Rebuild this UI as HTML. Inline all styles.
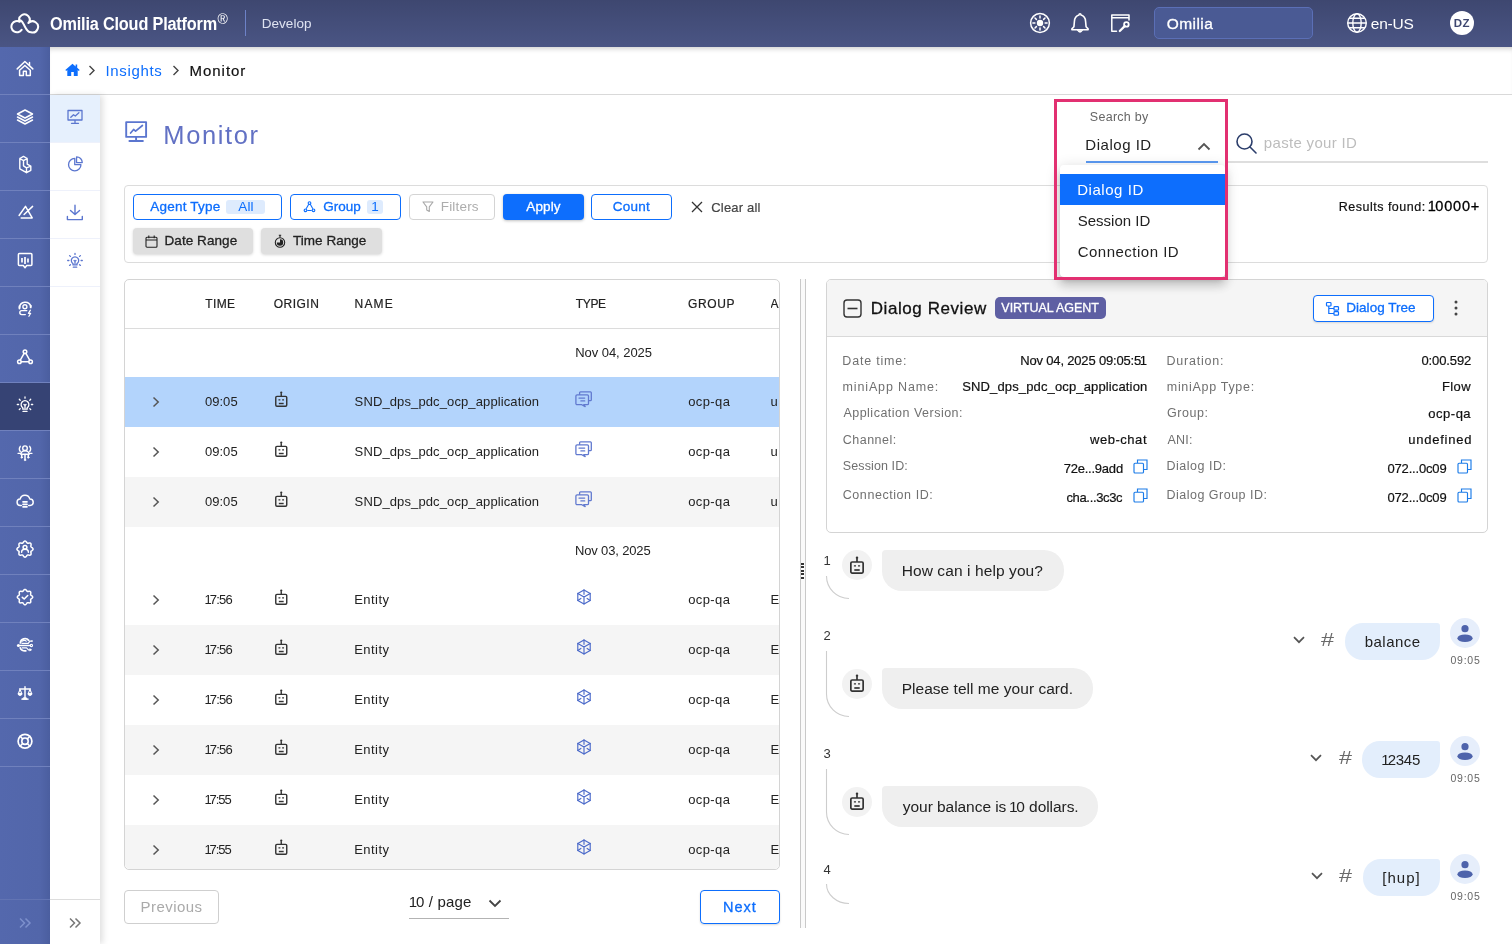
<!DOCTYPE html>
<html>
<head>
<meta charset="utf-8">
<title>Monitor</title>
<style>
*{box-sizing:border-box;margin:0;padding:0}
html,body{width:1512px;height:944px;overflow:hidden;background:#fff}
body{font-family:"Liberation Sans",sans-serif;color:#212121;position:relative;font-size:13px;line-height:1.2;filter:opacity(1)}
.abs{position:absolute}
svg{display:block}
.t{position:absolute;white-space:nowrap;display:block}
i.n1{font-style:normal;margin:0 var(--n) 0 var(--n)}
.m{-webkit-text-stroke:.3px currentColor}
.m2{-webkit-text-stroke:.2px currentColor}
#top{position:absolute;left:0;top:0;width:1512px;height:47px;background:linear-gradient(#3e4770,#4a5584);z-index:30}
#top .sep{position:absolute;left:245px;top:10px;width:1px;height:26px;background:#6d82c8}
#top .tenant{position:absolute;left:1154px;top:7px;width:159px;height:32px;border:1px solid #5b6fb6;border-radius:5px;background:#4a5a94}
#top .ava{position:absolute;left:1450px;top:11px;width:24px;height:24px;border-radius:50%;background:#fff}
#sb1{position:absolute;left:0;top:47px;width:50px;height:897px;overflow:hidden;background:linear-gradient(90deg,#5468ad 0,#5266aa 80%,#4b5e9f 100%);z-index:20}
#sb1 .it{position:absolute;left:0;width:50px;height:48px;border-bottom:1px solid #7081bd}
#sb1 .it.act{background:#364374}
#sb1 .it svg{position:absolute;left:15px;top:12px}
#sb1 .foot{position:absolute;left:0;top:852px;width:50px;height:45px;border-top:1px solid #6274b3}
#sb2{position:absolute;left:50px;top:95px;width:50px;height:849px;background:#fff;z-index:19;box-shadow:3px 0 6px rgba(0,0,0,.12)}
#sb2 .it{position:absolute;left:0;width:50px;height:48px;border-bottom:1px solid #eef1fb}
#sb2 .it.act{background:#e6f0fd}
#sb2 .it svg{position:absolute;left:15px;top:12px}
#sb2 .foot{position:absolute;left:0;top:804px;width:50px;height:45px;border-top:1px solid #ddd}
#bc{position:absolute;left:50px;top:47px;width:1462px;height:48px;background:#fff;border-bottom:1px solid #d9d9d9;z-index:18;box-shadow:inset 0 5px 5px -3px rgba(0,0,0,.18)}
.fbox{position:absolute;left:124px;top:185px;width:1364px;height:78px;border:1px solid #dcdcdc;border-radius:4px}
.btn{position:absolute;height:25.500px;border-radius:4px}
.btn.o{border:1.500px solid #0d6efd;background:#fff}
.btn.g{background:#dfdfdf;box-shadow:0 1px 3px rgba(0,0,0,.16)}
.btn.p{background:#0d6efd;box-shadow:0 1px 3px rgba(0,0,0,.25)}
.btn.d{border:1px solid #d4d4d4;background:#fff}
.chip{position:absolute;height:14px;background:#deebfd;border-radius:3px}
.pink{position:absolute;left:1054px;top:99px;width:174px;height:181px;border:3px solid #e23071;z-index:13}
.dd{position:absolute;left:1060px;top:165px;width:165px;height:112px;background:#fff;border-radius:4px;box-shadow:0 5px 5px -3px rgba(0,0,0,.2),0 8px 10px 1px rgba(0,0,0,.14),0 3px 14px 2px rgba(0,0,0,.12);z-index:11}
.z{z-index:11}
.tbl{position:absolute;left:124px;top:279px;width:656px;height:591px;border:1px solid #d4d4d4;border-radius:5px}
.card{position:absolute;left:826px;top:279px;width:662px;height:254px;border:1px solid #d4d4d4;border-radius:5px;background:#fff;overflow:hidden}
.chd{position:absolute;left:0;top:0;width:100%;height:57px;background:#f5f5f5;border-bottom:1px solid #d9d9d9}
.bb{position:absolute;height:41px;border-radius:4px 20px 20px 20px;background:#efefef}
.ub{position:absolute;height:37px;border-radius:18px 3px 18px 18px;background:#e3eefc}
</style>
</head>
<body>
<div id="top">
<svg class="abs" style="left:10px;top:12px" width="30" height="23" viewBox="0 0 30 23" fill="none" stroke="#fff" stroke-width="2" stroke-linecap="round" stroke-linejoin="round"><path d="M11.600 17.900A5.600 5.600 0 1 1 9.700 9.800 5.200 5.200 0 1 1 18.400 11 5.600 5.600 0 1 1 21 20.300C17 20.300 15.500 15.500 13.700 12.300 12.700 10.300 11.800 9 10.700 8.400"/></svg>
<div class="t" style="left:49.68px;top:12.8px;font-size:17.5px;line-height:23px;letter-spacing:-0.2px;x:-0.789px;color:#fff;font-weight:bold;transform:scaleX(.93);transform-origin:0 50%">Omilia Cloud Platform</div>
<div class="t" style="left:217.500px;top:12px;font-size:14px;line-height:14px;color:#fff">®</div>
<div class="sep"></div>
<div class="t" style="left:261.79px;top:14.5px;font-size:13.5px;line-height:18px;letter-spacing:0.024px;color:#dfe3f1">Develop</div>
<svg class="abs" style="left:1029px;top:12px" width="22" height="22" viewBox="0 0 22 22" fill="none" stroke="#fff" stroke-width="1.500" stroke-linecap="round"><circle cx="11" cy="11" r="9.400"/><circle cx="11" cy="11" r="3.200" fill="#fff" stroke="none"/><path d="M11 3.900v2M11 16.100v2M3.900 11h2M16.100 11h2M6 6l1.400 1.400M14.600 14.600 16 16M6 16l1.400-1.400M14.600 7.400 16 6"/></svg>
<svg class="abs" style="left:1069px;top:11px" width="22" height="24" viewBox="0 0 22 24" fill="none" stroke="#fff" stroke-width="1.600" stroke-linecap="round" stroke-linejoin="round"><path d="M11 2.800c.7 0 1 .5 1.100 1.300 3 .8 4.300 3.200 4.500 6.400l.5 5.300 2 2.100v.8H2.900v-.8l2-2.100.5-5.300C5.600 7.300 6.900 4.900 9.900 4.100 10 3.300 10.300 2.800 11 2.800Z"/><path d="M8.600 19.400a2.500 2.500 0 0 0 4.800 0Z" fill="#fff" stroke-width="1"/></svg>
<svg class="abs" style="left:1109px;top:12px" width="24" height="22" viewBox="0 0 24 22" fill="none" stroke="#fff" stroke-width="1.500" stroke-linecap="round" stroke-linejoin="round"><path d="M7.500 19.200H2.800V2.900h17.200v5.200M2.800 5.800h17.200"/><circle cx="17.400" cy="12.400" r="2.300" stroke-width="1.800"/><path d="M15.700 14.100l-4.900 4.900" stroke-width="2.200"/></svg>
<div class="tenant"></div>
<div class="t m" style="left:1166.67px;top:13.5px;font-size:15.5px;line-height:20px;letter-spacing:0.442px;color:#fff">Omilia</div>
<svg class="abs" style="left:1346px;top:12px" width="22" height="22" viewBox="0 0 22 22" fill="none" stroke="#fff" stroke-width="1.400"><circle cx="11" cy="11" r="9.300"/><ellipse cx="11" cy="11" rx="4.200" ry="9.300"/><path d="M1.700 11h18.600M3.300 6.300h15.400M3.300 15.700h15.400"/></svg>
<div class="t" style="left:1370.74px;top:13.5px;font-size:15.5px;line-height:20px;letter-spacing:-0.217px;color:#fff">en-US</div>
<div class="ava"></div>
<div class="t" style="left:1453.83px;top:15.8px;font-size:11.5px;line-height:15px;letter-spacing:0.457px;color:#3e4770;font-weight:bold">DZ</div>
</div>
<div id="sb1"><div class="it" style="top:0px"><svg width="20" height="20" viewBox="0 0 20 20" fill="none" stroke="#fff" stroke-width="1.5" stroke-linecap="round" stroke-linejoin="round"><path d="M2.200 9.900 9.900 2.500l7.900 7.400M14.500 3.400v3" stroke-width="1.500"/><path d="M4.600 11.300 9.900 6.500l5.400 4.800v5.300H11.300V12.200H8.400v4.400H4.600Z" stroke-width="1.500"/></svg></div>
<div class="it" style="top:48px"><svg width="20" height="20" viewBox="0 0 20 20" fill="none" stroke="#fff" stroke-width="1.5" stroke-linecap="round" stroke-linejoin="round"><path d="M10 3 17.5 7 10 11 2.500 7ZM2.500 10l7.500 4 7.500-4M2.500 13l7.500 4 7.500-4"/></svg></div>
<div class="it" style="top:96px"><svg width="20" height="20" viewBox="0 0 20 20" fill="none" stroke="#fff" stroke-width="1.5" stroke-linecap="round" stroke-linejoin="round"><path d="M8.500 1.400 12.200 3.500V9.200L15.800 11.200V15.300L11.500 17.700 4.800 13.800V3.500ZM4.800 3.500 8.500 5.600 12.200 3.500M8.500 5.600V10.800L11.500 12.800 15.800 11.200M11.500 12.800V17.700" stroke-width="1.400"/></svg></div>
<div class="it" style="top:144px"><svg width="20" height="20" viewBox="0 0 20 20" fill="none" stroke="#fff" stroke-width="1.5" stroke-linecap="round" stroke-linejoin="round"><path d="M4.100 12.500 10.500 3.400 17.200 14.900H6.200M9.100 11.500 17.600 3.400"/></svg></div>
<div class="it" style="top:192px"><svg width="20" height="20" viewBox="0 0 20 20" fill="none" stroke="#fff" stroke-width="1.5" stroke-linecap="round" stroke-linejoin="round"><path d="M4.400 2.500h11.500a1 1 0 0 1 1 1v10a1 1 0 0 1-1 1h-4.200L10 16.700 8.300 14.500H4.400a1 1 0 0 1-1-1v-10a1 1 0 0 1 1-1Z"/><path d="M7 7v4.500M10 6v7M13 7.500v4" stroke-width="1.700" stroke-linecap="butt"/></svg></div>
<div class="it" style="top:240px"><svg width="20" height="20" viewBox="0 0 20 20" fill="none" stroke="#fff" stroke-width="1.5" stroke-linecap="round" stroke-linejoin="round"><path d="M4.500 8.600A5.800 5.800 0 0 1 15.800 7.300" stroke-width="1.500"/><path d="M4.500 7.200v2.400M15.700 6.600v1.800" stroke-width="1.900"/><circle cx="9.900" cy="7.700" r="2" stroke-width="1.400"/><path d="M11.800 11.600H6.800a2 2 0 0 0 0 4H10.300" stroke-width="1.400"/><path d="M15.400 11.200l-2 3.100h2.300l-1.800 3" stroke-width="1.200"/></svg></div>
<div class="it" style="top:288px"><svg width="20" height="20" viewBox="0 0 20 20" fill="none" stroke="#fff" stroke-width="1.5" stroke-linecap="round" stroke-linejoin="round"><circle cx="10" cy="4.700" r="1.800"/><circle cx="4.400" cy="14.700" r="1.800"/><circle cx="15.600" cy="14.700" r="1.800"/><path d="M9.100 6.300 5.300 13.100M10.900 6.300l3.800 6.800M6.200 14.700h7.600"/></svg></div>
<div class="it act" style="top:336px"><svg width="20" height="20" viewBox="0 0 20 20" fill="none" stroke="#fff" stroke-width="1.5" stroke-linecap="round" stroke-linejoin="round"><path d="M7.800 12.800a3.900 3.900 0 1 1 4.400 0v1.400H7.800ZM8 16.400h4M10 10.300v2.500M9 9.500l1 .9 1-.9" stroke-width="1.300"/><path d="M10 2v1.200M4.300 4.300l.9.900M15.700 4.300l-.9.900M2.300 9.500h1.300M16.400 9.500h1.300M4.300 14.500l.9-.8M15.700 14.500l-.9-.8" stroke-width="1.300"/></svg></div>
<div class="it" style="top:384px"><svg width="20" height="20" viewBox="0 0 20 20" fill="none" stroke="#fff" stroke-width="1.5" stroke-linecap="round" stroke-linejoin="round"><circle cx="10" cy="5.200" r="2.300" stroke-width="1.400"/><path d="M5.800 11.300a4.200 3.600 0 0 1 8.400 0Z" stroke-width="1.400"/><path d="M5.300 3.300q-2 2.600 0 5.200M14.700 3.300q2 2.600 0 5.200M5.500 10.300H3M14.500 10.300H17" stroke-width="1.300"/><path d="M10 11.500v5M6.700 11.500v2.600M13.300 11.500v2.600" stroke-width="1.500"/><circle cx="10" cy="17" r=".8" fill="#fff" stroke-width=".6"/><circle cx="6.700" cy="14.500" r=".8" fill="#fff" stroke-width=".6"/><circle cx="13.300" cy="14.500" r=".8" fill="#fff" stroke-width=".6"/></svg></div>
<div class="it" style="top:432px"><svg width="20" height="20" viewBox="0 0 20 20" fill="none" stroke="#fff" stroke-width="1.5" stroke-linecap="round" stroke-linejoin="round"><path d="M6.300 14.500H5.500a3.200 3.200 0 0 1-.4-6.400 5 5 0 0 1 9.700-.2 3.300 3.300 0 0 1 .2 6.600h-1.300"/><path d="M8 10.800h4M8 13.300h4M8 15.800h4" stroke-width="1.700"/></svg></div>
<div class="it" style="top:480px"><svg width="20" height="20" viewBox="0 0 20 20" fill="none" stroke="#fff" stroke-width="1.5" stroke-linecap="round" stroke-linejoin="round"><path d="M10.00 2.00L10.52 2.13L11.00 2.49L11.41 2.99L11.77 3.51L12.09 3.93L12.45 4.19L12.88 4.26L13.41 4.19L14.03 4.07L14.67 4.01L15.27 4.10L15.73 4.37L16.00 4.83L16.09 5.43L16.03 6.07L15.91 6.69L15.84 7.22L15.91 7.65L16.17 8.01L16.59 8.33L17.11 8.69L17.61 9.10L17.97 9.58L18.10 10.10L17.97 10.62L17.61 11.10L17.11 11.51L16.59 11.87L16.17 12.19L15.91 12.55L15.84 12.98L15.91 13.51L16.03 14.13L16.09 14.77L16.00 15.37L15.73 15.83L15.27 16.10L14.67 16.19L14.03 16.13L13.41 16.01L12.88 15.94L12.45 16.01L12.09 16.27L11.77 16.69L11.41 17.21L11.00 17.71L10.52 18.07L10.00 18.20L9.48 18.07L9.00 17.71L8.59 17.21L8.23 16.69L7.91 16.27L7.55 16.01L7.12 15.94L6.59 16.01L5.97 16.13L5.33 16.19L4.73 16.10L4.27 15.83L4.00 15.37L3.91 14.77L3.97 14.13L4.09 13.51L4.16 12.98L4.09 12.55L3.83 12.19L3.41 11.87L2.89 11.51L2.39 11.10L2.03 10.62L1.90 10.10L2.03 9.58L2.39 9.10L2.89 8.69L3.41 8.33L3.83 8.01L4.09 7.65L4.16 7.22L4.09 6.69L3.97 6.07L3.91 5.43L4.00 4.83L4.27 4.37L4.73 4.10L5.33 4.01L5.97 4.07L6.59 4.19L7.12 4.26L7.55 4.19L7.91 3.93L8.23 3.51L8.59 2.99L9.00 2.49L9.48 2.13Z" stroke-width="1.500"/><circle cx="10" cy="8.300" r="1.900" stroke-width="1.500"/><path d="M6.600 13.300a3.400 3 0 0 1 6.800 0" stroke-width="1.500"/></svg></div>
<div class="it" style="top:528px"><svg width="20" height="20" viewBox="0 0 20 20" fill="none" stroke="#fff" stroke-width="1.5" stroke-linecap="round" stroke-linejoin="round"><path d="M10.00 2.40L10.50 2.52L10.95 2.86L11.35 3.33L11.68 3.82L12.00 4.22L12.33 4.46L12.75 4.53L13.25 4.47L13.83 4.36L14.44 4.31L15.01 4.39L15.44 4.66L15.71 5.09L15.79 5.66L15.74 6.27L15.63 6.85L15.57 7.35L15.64 7.77L15.88 8.10L16.28 8.42L16.77 8.75L17.24 9.15L17.58 9.60L17.70 10.10L17.58 10.60L17.24 11.05L16.77 11.45L16.28 11.78L15.88 12.10L15.64 12.43L15.57 12.85L15.63 13.35L15.74 13.93L15.79 14.54L15.71 15.11L15.44 15.54L15.01 15.81L14.44 15.89L13.83 15.84L13.25 15.73L12.75 15.67L12.33 15.74L12.00 15.98L11.68 16.38L11.35 16.87L10.95 17.34L10.50 17.68L10.00 17.80L9.50 17.68L9.05 17.34L8.65 16.87L8.32 16.38L8.00 15.98L7.67 15.74L7.25 15.67L6.75 15.73L6.17 15.84L5.56 15.89L4.99 15.81L4.56 15.54L4.29 15.11L4.21 14.54L4.26 13.93L4.37 13.35L4.43 12.85L4.36 12.43L4.12 12.10L3.72 11.78L3.23 11.45L2.76 11.05L2.42 10.60L2.30 10.10L2.42 9.60L2.76 9.15L3.23 8.75L3.72 8.42L4.12 8.10L4.36 7.77L4.43 7.35L4.37 6.85L4.26 6.27L4.21 5.66L4.29 5.09L4.56 4.66L4.99 4.39L5.56 4.31L6.17 4.36L6.75 4.47L7.25 4.53L7.67 4.46L8.00 4.22L8.32 3.82L8.65 3.33L9.05 2.86L9.50 2.52Z" stroke-width="1.500"/><path d="M7.300 10.300 9.200 12l3.500-3.500" stroke-width="1.600"/></svg></div>
<div class="it" style="top:576px"><svg width="20" height="20" viewBox="0 0 20 20" fill="none" stroke="#fff" stroke-width="1.5" stroke-linecap="round" stroke-linejoin="round"><path d="M4.600 10.500H15.200" stroke-width="1.300"/><circle cx="3.400" cy="10.500" r="1.500" fill="#fff" stroke="none"/><circle cx="16.400" cy="10.500" r="1.150" stroke-width="1.100"/><path d="M5.400 7.900A4.600 4.400 0 0 1 13.700 5.400" stroke-width="1.800"/><path d="M7.300 6.200a2.500 2 0 0 1 4 0" stroke-width="1.100"/><path d="M7 8.300H13.200L15 6.100H17" stroke-width="1.200"/><circle cx="17" cy="6" r=".8" fill="#fff" stroke="none"/><path d="M5.300 12.800A4.500 3.600 0 0 0 10.800 15.800" stroke-width="1.800"/><path d="M7.200 12.800H11.600L13.400 14.800H15.800" stroke-width="1.200"/><path d="M15 13.800 16.600 14.800 15 15.800Z" fill="#fff" stroke-width=".6"/></svg></div>
<div class="it" style="top:624px"><svg width="20" height="20" viewBox="0 0 20 20" fill="none" stroke="#fff" stroke-width="1.5" stroke-linecap="round" stroke-linejoin="round"><g transform="translate(1 1) scale(.9)"><path d="M10 3v12.500M6.500 16.800h7M4 5.500h12M10 3.200v0" stroke-width="1.600"/><path d="M4.500 6 2.500 11h4ZM15.500 6l-2 5h4Z" stroke-width="1.300"/><path d="M2.500 11a2 1.800 0 0 0 4 0ZM13.500 11a2 1.800 0 0 0 4 0Z" fill="#fff" stroke-width="1"/><path d="M7.500 17h5l-1-1.700h-3Z" fill="#fff" stroke-width="1"/></g></svg></div>
<div class="it" style="top:672px"><svg width="20" height="20" viewBox="0 0 20 20" fill="none" stroke="#fff" stroke-width="1.5" stroke-linecap="round" stroke-linejoin="round"><circle cx="10" cy="10.200" r="6.900" stroke-width="1.700"/><circle cx="10" cy="10.200" r="3.200" stroke-width="1.600"/><path d="M5.100 5.300l2.600 2.600M14.900 5.300l-2.600 2.600M5.100 15.100l2.600-2.600M14.900 15.100l-2.600-2.600" stroke-width="1.500"/></svg></div>
<div class="foot"><svg width="14" height="12" viewBox="0 0 14 12" fill="none" stroke="#7d90cc" stroke-width="1.500" style="position:absolute;left:18px;top:16.5px"><path d="M2 1.500 6.500 6 2 10.500M7.500 1.500 12 6 7.500 10.500"/></svg></div></div>
<div id="sb2"><div class="it act" style="top:0px"><svg width="20" height="20" viewBox="0 0 20 20" fill="none" stroke="#5b76cf" stroke-width="1.300" stroke-linecap="round" stroke-linejoin="round"><path d="M3 3.500h14v9.500H3ZM10 13v3M6.500 16.300h7M5.800 10.300l2.700-2.600 1.800 1.300 3.600-3.200"/></svg></div>
<div class="it" style="top:48px"><svg width="20" height="20" viewBox="0 0 20 20" fill="none" stroke="#5b76cf" stroke-width="1.300" stroke-linecap="round" stroke-linejoin="round"><path d="M9.750 3.450a6.200 6.200 0 1 0 6.200 6.200H9.750ZM11.550 1.850v5.700h5.700a5.700 5.700 0 0 0-5.700-5.700Z"/></svg></div>
<div class="it" style="top:96px"><svg width="20" height="20" viewBox="0 0 20 20" fill="none" stroke="#5b76cf" stroke-width="1.300" stroke-linecap="round" stroke-linejoin="round"><path d="M10 2.300v9M5.500 7.400 10 11.600l4.600-4.200M2.400 13.400v3.200h14.900v-3.200" stroke-width="1.400"/></svg></div>
<div class="it" style="top:144px"><svg width="20" height="20" viewBox="0 0 20 20" fill="none" stroke="#5b76cf" stroke-width="1.300" stroke-linecap="round" stroke-linejoin="round"><path d="M8 12.600a3.700 3.700 0 1 1 4 0v1.300H8ZM8.300 16.200h3.400M10 10.300v2.300M9.100 9.500l.9.900.9-.9"/><path d="M10 2.300v1.100M4.600 4.600l.8.800M15.400 4.600l-.8.800M2.700 9.500h1.200M16.100 9.500h1.200M4.600 14.400l.8-.7M15.400 14.400l-.8-.7"/></svg></div>
<div class="foot"><svg width="14" height="12" viewBox="0 0 14 12" fill="none" stroke="#777" stroke-width="1.500" style="position:absolute;left:18px;top:16.5px"><path d="M2 1.500 6.500 6 2 10.500M7.500 1.500 12 6 7.500 10.500"/></svg></div></div>
<div id="bc">
<svg class="abs" style="left:15px;top:16px" width="15" height="14" viewBox="0 0 15 14" fill="#0d6efd"><path d="M7.500.8 0.300 7l.9 1L2.300 7v6h3.900V9h2.600v4h3.900V7l1.100 1 .9-1-2.500-2.200V1.500h-1.600v1.900Z"/></svg>
<svg class="abs" style="left:38px;top:18px" width="8" height="11" viewBox="0 0 8 11" fill="none" stroke="#444" stroke-width="1.400"><path d="M1.500 1 6 5.500 1.500 10"/></svg>
<svg class="abs" style="left:122px;top:18px" width="8" height="11" viewBox="0 0 8 11" fill="none" stroke="#444" stroke-width="1.400"><path d="M1.500 1 6 5.500 1.500 10"/></svg>
<div class="t" style="left:55.42px;top:14.0px;font-size:15px;line-height:20px;letter-spacing:0.66px;color:#0d6efd">Insights</div>
<div class="t m2" style="left:139.47px;top:14.0px;font-size:15px;line-height:20px;letter-spacing:0.975px;color:#111">Monitor</div>
</div>
<svg class="abs" style="left:124px;top:120px" width="25" height="25" viewBox="0 0 25 25" fill="none" stroke="#5b76cf" stroke-width="1.900" stroke-linecap="round" stroke-linejoin="round"><path d="M2.200 2.100h19.900v14.800H2.200ZM12.100 17v3.600M5.400 21h13.500"/><path d="M6.600 13 9.600 9.500l2 1.600 6.800-5.600" stroke-width="1.700"/></svg>
<div class="t" style="left:163.31px;top:118.5px;font-size:25.5px;line-height:33px;letter-spacing:1.614px;color:#6271c4">Monitor</div>
<div class="fbox"></div>
<div class="btn o" style="left:133px;top:194px;width:149px"></div><div class="chip" style="left:226px;top:200px;width:39px"></div>
<div class="t m" style="left:150.37px;top:198.0px;font-size:13.5px;line-height:18px;letter-spacing:0.196px;color:#0d6efd">Agent Type</div>
<div class="t" style="left:238.37px;top:198.0px;font-size:13.5px;line-height:18px;letter-spacing:0.057px;color:#0d6efd">All</div>
<div class="btn o" style="left:290px;top:194px;width:110.500px"></div><div class="chip" style="left:367.300px;top:200px;width:16.200px"></div>
<svg class="abs" style="left:302.500px;top:201px" width="13" height="12" viewBox="0 0 13 12" fill="none" stroke="#0d6efd" stroke-width="1.100"><path d="M5.700 3.200 3.200 7.700M7.300 3.200l2.500 4.500M4.300 9.500h4.400"/><circle cx="6.500" cy="2.100" r="1.350"/><circle cx="2.500" cy="9.300" r="1.350"/><circle cx="10.500" cy="9.300" r="1.350"/></svg>
<div class="t m" style="left:323.22px;top:198.0px;font-size:13.5px;line-height:18px;letter-spacing:-0.021px;color:#0d6efd">Group</div>
<div class="t" style="left:371.27px;top:198.0px;font-size:13.5px;line-height:18px;letter-spacing:0px;color:#0d6efd">1</div>
<div class="btn d" style="left:408.500px;top:194px;width:86.500px"></div>
<svg class="abs" style="left:421.500px;top:201px" width="12" height="12" viewBox="0 0 12 12" fill="none" stroke="#a8a8a8" stroke-width="1.100" stroke-linejoin="round"><path d="M1 1h10L7.300 5.800v4.700L4.700 9V5.800Z"/></svg>
<div class="t" style="left:440.79px;top:198.0px;font-size:13.5px;line-height:18px;letter-spacing:0.174px;color:#adadad">Filters</div>
<div class="btn p" style="left:503px;top:194px;width:80.500px"></div>
<div class="t m" style="left:526.37px;top:198.0px;font-size:13.5px;line-height:18px;letter-spacing:0.118px;color:#fff">Apply</div>
<div class="btn o" style="left:591px;top:194px;width:80.500px"></div>
<div class="t m" style="left:612.71px;top:198.0px;font-size:13.5px;line-height:18px;letter-spacing:0.238px;color:#0d6efd">Count</div>
<svg class="abs" style="left:691px;top:201px" width="12" height="12" viewBox="0 0 12 12" fill="none" stroke="#333" stroke-width="1.300"><path d="M1 1l10 10M11 1 1 11"/></svg>
<div class="t m2" style="left:711.24px;top:198.5px;font-size:13px;line-height:17px;letter-spacing:0.193px;color:#444">Clear all</div>
<div class="btn g" style="left:133px;top:228px;width:120px"></div>
<svg class="abs" style="left:145px;top:235px" width="13" height="13" viewBox="0 0 13 13" fill="none" stroke="#222" stroke-width="1.100"><rect x="1" y="2.200" width="11" height="10" rx="1"/><path d="M1 5h11M3.800 .600v2.600M9.200 .600v2.600"/></svg>
<div class="t m" style="left:164.49px;top:232.0px;font-size:13.5px;line-height:18px;letter-spacing:0.072px;color:#222">Date Range</div>
<div class="btn g" style="left:261px;top:228px;width:121px"></div>
<svg class="abs" style="left:273px;top:234px" width="14" height="15" viewBox="0 0 14 15" fill="none" stroke="#222" stroke-width="1.100"><circle cx="7" cy="8.500" r="4.700"/><path d="M5.800 1.300h2.400M7 1.300v2.300"/><path d="M7 8.500V5.300A3.200 3.200 0 1 1 3.800 8.500Z" fill="#222" stroke="none"/></svg>
<div class="t m" style="left:293.1px;top:232.0px;font-size:13.5px;line-height:18px;letter-spacing:0.008px;color:#222">Time Range</div>
<div class="t m2" style="left:1338.77px;top:199.0px;font-size:12.5px;line-height:16px;letter-spacing:0.496px;color:#111">Results found:</div>
<div class="t m" style="left:1429.03px;top:197.3px;font-size:14.5px;line-height:19px;letter-spacing:0.832px;--n:-1.34px;color:#000"><i class="n1">1</i>0000+</div>
<div class="tbl"></div>
<div class="t m2" style="left:205.33px;top:295.7px;font-size:12px;line-height:16px;letter-spacing:0.338px;color:#222">TIME</div>
<div class="t m2" style="left:273.63px;top:295.7px;font-size:12px;line-height:16px;letter-spacing:0.515px;color:#222">ORIGIN</div>
<div class="t m2" style="left:354.62px;top:295.7px;font-size:12px;line-height:16px;letter-spacing:1.143px;color:#222">NAME</div>
<div class="t m2" style="left:575.73px;top:295.7px;font-size:12px;line-height:16px;letter-spacing:-0.32px;color:#222">TYPE</div>
<div class="t m2" style="left:688.1px;top:295.7px;font-size:12px;line-height:16px;letter-spacing:0.605px;color:#222">GROUP</div>
<div class="t m2" style="left:770.500px;top:295.700px;width:8.500px;overflow:hidden;font-size:12px;line-height:16px;color:#222">A</div>
<div class="abs" style="left:125px;top:328px;width:654px;height:1px;background:#dcdcdc"></div>
<div class="t" style="left:575.13px;top:344.2px;font-size:13px;line-height:17px;letter-spacing:-0.039px;color:#222">Nov 04, 2025</div>
<div class="t" style="left:575.03px;top:542.2px;font-size:13px;line-height:17px;letter-spacing:-0.157px;color:#222">Nov 03, 2025</div>
<div class="abs" style="left:125px;top:377px;width:654px;height:50px;background:#b3d4fc"></div>
<svg class="abs" style="left:151.8px;top:395.7px" width="8" height="12" viewBox="0 0 8 12" fill="none" stroke="#555" stroke-width="1.500"><path d="M1.500 1.500 6.200 6 1.500 10.500"/></svg>
<div class="t" style="left:204.89px;top:393.2px;font-size:13px;line-height:17px;letter-spacing:0.052px;color:#222">09:05</div>
<svg class="abs" style="left:275.3px;top:390.7px" width="12.5" height="16.1" viewBox="0 0 14 18" fill="none" stroke="#333" stroke-width="1.6"><rect x=".85" y="6" width="12.300" height="11.100" rx="1.300"/><path d="M7 6V2.500"/><circle cx="7" cy="1.800" r="1.250" fill="#333" stroke="none"/><path d="M4.300 14h5.400"/><path d="M3.900 9.900h2.100M8 9.900h2.100" stroke-width="1.200"/></svg>
<div class="t" style="left:354.61px;top:393.2px;font-size:13px;line-height:17px;letter-spacing:0.116px;color:#222">SND_dps_pdc_ocp_application</div>
<svg class="abs" style="left:575.2px;top:390.8px" width="17" height="17" viewBox="0 0 17 17" fill="none" stroke="#6179cf" stroke-width="1.300" stroke-linejoin="round" stroke-linecap="round"><path d="M4.600 3.300V1.700a.9.9 0 0 1 .9-.9h9.900a.9.9 0 0 1 .9.900v7.100a.9.9 0 0 1-.9.900h-1.300"/><path d="M2.100 3.900h10.200a1.200 1.200 0 0 1 1.200 1.200v7.400a1.200 1.200 0 0 1-1.200 1.200H8.800l1.400 1.900-3.400-1.900H2.100a1.200 1.200 0 0 1-1.200-1.200V5.100a1.200 1.200 0 0 1 1.200-1.200Z"/><path d="M4 7.100h5.700M5.900 9.900h3.800"/></svg>
<div class="t" style="left:688.15px;top:393.2px;font-size:13px;line-height:17px;letter-spacing:0.399px;color:#222">ocp-qa</div>
<div class="t" style="left:770.500px;top:393px;width:8.500px;overflow:hidden;font-size:13px;line-height:17px;color:#222">u</div>
<svg class="abs" style="left:151.8px;top:445.7px" width="8" height="12" viewBox="0 0 8 12" fill="none" stroke="#555" stroke-width="1.500"><path d="M1.500 1.500 6.200 6 1.500 10.500"/></svg>
<div class="t" style="left:204.89px;top:443.2px;font-size:13px;line-height:17px;letter-spacing:0.052px;color:#222">09:05</div>
<svg class="abs" style="left:275.3px;top:440.7px" width="12.5" height="16.1" viewBox="0 0 14 18" fill="none" stroke="#333" stroke-width="1.6"><rect x=".85" y="6" width="12.300" height="11.100" rx="1.300"/><path d="M7 6V2.500"/><circle cx="7" cy="1.800" r="1.250" fill="#333" stroke="none"/><path d="M4.300 14h5.400"/><path d="M3.900 9.900h2.100M8 9.900h2.100" stroke-width="1.200"/></svg>
<div class="t" style="left:354.61px;top:443.2px;font-size:13px;line-height:17px;letter-spacing:0.116px;color:#222">SND_dps_pdc_ocp_application</div>
<svg class="abs" style="left:575.2px;top:440.8px" width="17" height="17" viewBox="0 0 17 17" fill="none" stroke="#6179cf" stroke-width="1.300" stroke-linejoin="round" stroke-linecap="round"><path d="M4.600 3.300V1.700a.9.9 0 0 1 .9-.9h9.900a.9.9 0 0 1 .9.900v7.100a.9.9 0 0 1-.9.900h-1.300"/><path d="M2.100 3.900h10.200a1.200 1.200 0 0 1 1.200 1.200v7.400a1.200 1.200 0 0 1-1.200 1.200H8.800l1.400 1.900-3.400-1.900H2.100a1.200 1.200 0 0 1-1.200-1.200V5.100a1.200 1.200 0 0 1 1.200-1.200Z"/><path d="M4 7.100h5.700M5.900 9.900h3.800"/></svg>
<div class="t" style="left:688.15px;top:443.2px;font-size:13px;line-height:17px;letter-spacing:0.399px;color:#222">ocp-qa</div>
<div class="t" style="left:770.500px;top:443px;width:8.500px;overflow:hidden;font-size:13px;line-height:17px;color:#222">u</div>
<div class="abs" style="left:125px;top:477px;width:654px;height:50px;background:#f5f5f5"></div>
<svg class="abs" style="left:151.8px;top:495.7px" width="8" height="12" viewBox="0 0 8 12" fill="none" stroke="#555" stroke-width="1.500"><path d="M1.500 1.500 6.200 6 1.500 10.500"/></svg>
<div class="t" style="left:204.89px;top:493.2px;font-size:13px;line-height:17px;letter-spacing:0.052px;color:#222">09:05</div>
<svg class="abs" style="left:275.3px;top:490.7px" width="12.5" height="16.1" viewBox="0 0 14 18" fill="none" stroke="#333" stroke-width="1.6"><rect x=".85" y="6" width="12.300" height="11.100" rx="1.300"/><path d="M7 6V2.500"/><circle cx="7" cy="1.800" r="1.250" fill="#333" stroke="none"/><path d="M4.300 14h5.400"/><path d="M3.900 9.900h2.100M8 9.900h2.100" stroke-width="1.200"/></svg>
<div class="t" style="left:354.61px;top:493.2px;font-size:13px;line-height:17px;letter-spacing:0.116px;color:#222">SND_dps_pdc_ocp_application</div>
<svg class="abs" style="left:575.2px;top:490.8px" width="17" height="17" viewBox="0 0 17 17" fill="none" stroke="#6179cf" stroke-width="1.300" stroke-linejoin="round" stroke-linecap="round"><path d="M4.600 3.300V1.700a.9.9 0 0 1 .9-.9h9.900a.9.9 0 0 1 .9.900v7.100a.9.9 0 0 1-.9.900h-1.300"/><path d="M2.100 3.900h10.200a1.200 1.200 0 0 1 1.200 1.200v7.400a1.200 1.200 0 0 1-1.200 1.200H8.800l1.400 1.900-3.400-1.900H2.100a1.200 1.200 0 0 1-1.200-1.200V5.100a1.200 1.200 0 0 1 1.200-1.200Z"/><path d="M4 7.100h5.700M5.900 9.900h3.800"/></svg>
<div class="t" style="left:688.15px;top:493.2px;font-size:13px;line-height:17px;letter-spacing:0.399px;color:#222">ocp-qa</div>
<div class="t" style="left:770.500px;top:493px;width:8.500px;overflow:hidden;font-size:13px;line-height:17px;color:#222">u</div>
<svg class="abs" style="left:151.8px;top:593.7px" width="8" height="12" viewBox="0 0 8 12" fill="none" stroke="#555" stroke-width="1.500"><path d="M1.500 1.500 6.200 6 1.500 10.500"/></svg>
<div class="t" style="left:205.61px;top:591.2px;font-size:13px;line-height:17px;letter-spacing:-0.746px;--n:-1.2px;color:#222"><i class="n1">1</i>7:56</div>
<svg class="abs" style="left:275.3px;top:588.7px" width="12.5" height="16.1" viewBox="0 0 14 18" fill="none" stroke="#333" stroke-width="1.6"><rect x=".85" y="6" width="12.300" height="11.100" rx="1.300"/><path d="M7 6V2.500"/><circle cx="7" cy="1.800" r="1.250" fill="#333" stroke="none"/><path d="M4.300 14h5.400"/><path d="M3.900 9.900h2.100M8 9.900h2.100" stroke-width="1.200"/></svg>
<div class="t" style="left:354.13px;top:591.2px;font-size:13px;line-height:17px;letter-spacing:0.495px;color:#222">Entity</div>
<svg class="abs" style="left:575.5px;top:589px" width="16" height="16" viewBox="0 0 16 16" fill="none" stroke="#4a69c9" stroke-width="1.150" stroke-linejoin="round" stroke-linecap="round"><path d="M8 .9 14.200 4.400v7L8 14.900 1.800 11.400v-7Z"/><path d="M1.800 4.400 8 7.900l6.200-3.500M8 7.900v7M8 .9v4.400M1.800 11.400l3.100-2M14.200 11.400l-3.100-2"/></svg>
<div class="t" style="left:688.15px;top:591.2px;font-size:13px;line-height:17px;letter-spacing:0.399px;color:#222">ocp-qa</div>
<div class="t" style="left:770.500px;top:591px;width:8.500px;overflow:hidden;font-size:13px;line-height:17px;color:#222">E</div>
<div class="abs" style="left:125px;top:625px;width:654px;height:50px;background:#f5f5f5"></div>
<svg class="abs" style="left:151.8px;top:643.7px" width="8" height="12" viewBox="0 0 8 12" fill="none" stroke="#555" stroke-width="1.500"><path d="M1.500 1.500 6.200 6 1.500 10.500"/></svg>
<div class="t" style="left:205.61px;top:641.2px;font-size:13px;line-height:17px;letter-spacing:-0.746px;--n:-1.2px;color:#222"><i class="n1">1</i>7:56</div>
<svg class="abs" style="left:275.3px;top:638.7px" width="12.5" height="16.1" viewBox="0 0 14 18" fill="none" stroke="#333" stroke-width="1.6"><rect x=".85" y="6" width="12.300" height="11.100" rx="1.300"/><path d="M7 6V2.500"/><circle cx="7" cy="1.800" r="1.250" fill="#333" stroke="none"/><path d="M4.300 14h5.400"/><path d="M3.900 9.900h2.100M8 9.900h2.100" stroke-width="1.200"/></svg>
<div class="t" style="left:354.13px;top:641.2px;font-size:13px;line-height:17px;letter-spacing:0.495px;color:#222">Entity</div>
<svg class="abs" style="left:575.5px;top:639px" width="16" height="16" viewBox="0 0 16 16" fill="none" stroke="#4a69c9" stroke-width="1.150" stroke-linejoin="round" stroke-linecap="round"><path d="M8 .9 14.200 4.400v7L8 14.900 1.800 11.400v-7Z"/><path d="M1.800 4.400 8 7.900l6.200-3.500M8 7.900v7M8 .9v4.400M1.800 11.400l3.100-2M14.200 11.400l-3.100-2"/></svg>
<div class="t" style="left:688.15px;top:641.2px;font-size:13px;line-height:17px;letter-spacing:0.399px;color:#222">ocp-qa</div>
<div class="t" style="left:770.500px;top:641px;width:8.500px;overflow:hidden;font-size:13px;line-height:17px;color:#222">E</div>
<svg class="abs" style="left:151.8px;top:693.7px" width="8" height="12" viewBox="0 0 8 12" fill="none" stroke="#555" stroke-width="1.500"><path d="M1.500 1.500 6.200 6 1.500 10.500"/></svg>
<div class="t" style="left:205.61px;top:691.2px;font-size:13px;line-height:17px;letter-spacing:-0.746px;--n:-1.2px;color:#222"><i class="n1">1</i>7:56</div>
<svg class="abs" style="left:275.3px;top:688.7px" width="12.5" height="16.1" viewBox="0 0 14 18" fill="none" stroke="#333" stroke-width="1.6"><rect x=".85" y="6" width="12.300" height="11.100" rx="1.300"/><path d="M7 6V2.500"/><circle cx="7" cy="1.800" r="1.250" fill="#333" stroke="none"/><path d="M4.300 14h5.400"/><path d="M3.900 9.900h2.100M8 9.900h2.100" stroke-width="1.200"/></svg>
<div class="t" style="left:354.13px;top:691.2px;font-size:13px;line-height:17px;letter-spacing:0.495px;color:#222">Entity</div>
<svg class="abs" style="left:575.5px;top:689px" width="16" height="16" viewBox="0 0 16 16" fill="none" stroke="#4a69c9" stroke-width="1.150" stroke-linejoin="round" stroke-linecap="round"><path d="M8 .9 14.200 4.400v7L8 14.900 1.800 11.400v-7Z"/><path d="M1.800 4.400 8 7.900l6.200-3.500M8 7.900v7M8 .9v4.400M1.800 11.400l3.100-2M14.200 11.400l-3.100-2"/></svg>
<div class="t" style="left:688.15px;top:691.2px;font-size:13px;line-height:17px;letter-spacing:0.399px;color:#222">ocp-qa</div>
<div class="t" style="left:770.500px;top:691px;width:8.500px;overflow:hidden;font-size:13px;line-height:17px;color:#222">E</div>
<div class="abs" style="left:125px;top:725px;width:654px;height:50px;background:#f5f5f5"></div>
<svg class="abs" style="left:151.8px;top:743.7px" width="8" height="12" viewBox="0 0 8 12" fill="none" stroke="#555" stroke-width="1.500"><path d="M1.500 1.500 6.200 6 1.500 10.500"/></svg>
<div class="t" style="left:205.61px;top:741.2px;font-size:13px;line-height:17px;letter-spacing:-0.746px;--n:-1.2px;color:#222"><i class="n1">1</i>7:56</div>
<svg class="abs" style="left:275.3px;top:738.7px" width="12.5" height="16.1" viewBox="0 0 14 18" fill="none" stroke="#333" stroke-width="1.6"><rect x=".85" y="6" width="12.300" height="11.100" rx="1.300"/><path d="M7 6V2.500"/><circle cx="7" cy="1.800" r="1.250" fill="#333" stroke="none"/><path d="M4.300 14h5.400"/><path d="M3.900 9.900h2.100M8 9.900h2.100" stroke-width="1.200"/></svg>
<div class="t" style="left:354.13px;top:741.2px;font-size:13px;line-height:17px;letter-spacing:0.495px;color:#222">Entity</div>
<svg class="abs" style="left:575.5px;top:739px" width="16" height="16" viewBox="0 0 16 16" fill="none" stroke="#4a69c9" stroke-width="1.150" stroke-linejoin="round" stroke-linecap="round"><path d="M8 .9 14.200 4.400v7L8 14.900 1.800 11.400v-7Z"/><path d="M1.800 4.400 8 7.900l6.200-3.500M8 7.900v7M8 .9v4.400M1.800 11.400l3.100-2M14.200 11.400l-3.100-2"/></svg>
<div class="t" style="left:688.15px;top:741.2px;font-size:13px;line-height:17px;letter-spacing:0.399px;color:#222">ocp-qa</div>
<div class="t" style="left:770.500px;top:741px;width:8.500px;overflow:hidden;font-size:13px;line-height:17px;color:#222">E</div>
<svg class="abs" style="left:151.8px;top:793.7px" width="8" height="12" viewBox="0 0 8 12" fill="none" stroke="#555" stroke-width="1.500"><path d="M1.500 1.500 6.200 6 1.500 10.500"/></svg>
<div class="t" style="left:205.61px;top:791.2px;font-size:13px;line-height:17px;letter-spacing:-1.003px;--n:-1.2px;color:#222"><i class="n1">1</i>7:55</div>
<svg class="abs" style="left:275.3px;top:788.7px" width="12.5" height="16.1" viewBox="0 0 14 18" fill="none" stroke="#333" stroke-width="1.6"><rect x=".85" y="6" width="12.300" height="11.100" rx="1.300"/><path d="M7 6V2.500"/><circle cx="7" cy="1.800" r="1.250" fill="#333" stroke="none"/><path d="M4.300 14h5.400"/><path d="M3.900 9.900h2.100M8 9.900h2.100" stroke-width="1.200"/></svg>
<div class="t" style="left:354.13px;top:791.2px;font-size:13px;line-height:17px;letter-spacing:0.495px;color:#222">Entity</div>
<svg class="abs" style="left:575.5px;top:789px" width="16" height="16" viewBox="0 0 16 16" fill="none" stroke="#4a69c9" stroke-width="1.150" stroke-linejoin="round" stroke-linecap="round"><path d="M8 .9 14.200 4.400v7L8 14.900 1.800 11.400v-7Z"/><path d="M1.800 4.400 8 7.900l6.200-3.500M8 7.900v7M8 .9v4.400M1.800 11.400l3.100-2M14.200 11.400l-3.100-2"/></svg>
<div class="t" style="left:688.15px;top:791.2px;font-size:13px;line-height:17px;letter-spacing:0.399px;color:#222">ocp-qa</div>
<div class="t" style="left:770.500px;top:791px;width:8.500px;overflow:hidden;font-size:13px;line-height:17px;color:#222">E</div>
<div class="abs" style="left:125px;top:825px;width:654px;height:44px;background:#f5f5f5;border-radius:0 0 5px 5px"></div>
<svg class="abs" style="left:151.8px;top:843.7px" width="8" height="12" viewBox="0 0 8 12" fill="none" stroke="#555" stroke-width="1.500"><path d="M1.500 1.500 6.200 6 1.500 10.500"/></svg>
<div class="t" style="left:205.61px;top:841.2px;font-size:13px;line-height:17px;letter-spacing:-1.003px;--n:-1.2px;color:#222"><i class="n1">1</i>7:55</div>
<svg class="abs" style="left:275.3px;top:838.7px" width="12.5" height="16.1" viewBox="0 0 14 18" fill="none" stroke="#333" stroke-width="1.6"><rect x=".85" y="6" width="12.300" height="11.100" rx="1.300"/><path d="M7 6V2.500"/><circle cx="7" cy="1.800" r="1.250" fill="#333" stroke="none"/><path d="M4.300 14h5.400"/><path d="M3.900 9.900h2.100M8 9.900h2.100" stroke-width="1.200"/></svg>
<div class="t" style="left:354.13px;top:841.2px;font-size:13px;line-height:17px;letter-spacing:0.495px;color:#222">Entity</div>
<svg class="abs" style="left:575.5px;top:839px" width="16" height="16" viewBox="0 0 16 16" fill="none" stroke="#4a69c9" stroke-width="1.150" stroke-linejoin="round" stroke-linecap="round"><path d="M8 .9 14.200 4.400v7L8 14.900 1.800 11.400v-7Z"/><path d="M1.800 4.400 8 7.900l6.200-3.500M8 7.900v7M8 .9v4.400M1.800 11.400l3.100-2M14.200 11.400l-3.100-2"/></svg>
<div class="t" style="left:688.15px;top:841.2px;font-size:13px;line-height:17px;letter-spacing:0.399px;color:#222">ocp-qa</div>
<div class="t" style="left:770.500px;top:841px;width:8.500px;overflow:hidden;font-size:13px;line-height:17px;color:#222">E</div>
<div class="abs" style="left:124px;top:890px;width:95px;height:34px;border:1px solid #cfcfcf;border-radius:4px"></div>
<div class="t" style="left:140.57px;top:897.0px;font-size:15px;line-height:20px;letter-spacing:0.445px;color:#aaa">Previous</div>
<div class="t" style="left:410.14px;top:892.0px;font-size:15px;line-height:20px;letter-spacing:0.166px;--n:-1.38px;color:#222"><i class="n1">1</i>0 / page</div>
<svg class="abs" style="left:488px;top:899px" width="14" height="9" viewBox="0 0 14 9" fill="none" stroke="#444" stroke-width="1.800"><path d="M1.500 1.500 7 7l5.500-5.500"/></svg>
<div class="abs" style="left:409px;top:918px;width:100px;height:1px;background:#b3b3b3"></div>
<div class="abs" style="left:700px;top:890px;width:80px;height:34px;border:1.500px solid #0d6efd;border-radius:4px;box-shadow:0 1px 2px rgba(0,0,0,.15)"></div>
<div class="t m" style="left:723.01px;top:897.5px;font-size:14.5px;line-height:19px;letter-spacing:1.023px;color:#0d6efd">Next</div>
<div class="abs" style="left:800px;top:279px;width:6px;height:649px;border-left:1px solid #c9c9c9;border-right:1px solid #c9c9c9;background:#fafafa"></div>
<div class="abs" style="left:800.500px;top:563px;width:3px;height:17px;background:repeating-linear-gradient(#333 0 2px,#fff 2px 3.500px)"></div>
<div class="card"><div class="chd"></div></div>
<svg class="abs" style="left:842.500px;top:298.500px" width="19" height="19" viewBox="0 0 19 19" fill="none" stroke="#333" stroke-width="1.400"><rect x="1" y="1" width="17" height="17" rx="3"/><path d="M4.500 9.500h10" stroke-width="1.600"/></svg>
<div class="t m" style="left:870.71px;top:297.6px;font-size:17px;line-height:22px;letter-spacing:0.573px;color:#111">Dialog Review</div>
<div class="abs" style="left:995px;top:297px;width:110.500px;height:22px;border-radius:5px;background:#5e5fa3"></div>
<div class="t m" style="left:1001.35px;top:300.0px;font-size:12.5px;line-height:16px;letter-spacing:-0.034px;color:#fff">VIRTUAL AGENT</div>
<div class="abs" style="left:1313px;top:294.500px;width:120.500px;height:27px;border:1.500px solid #0d6efd;border-radius:4px;box-shadow:0 1px 2px rgba(0,0,0,.12);background:#fff"><svg class="abs" style="left:11px;top:5px" width="15" height="15" viewBox="0 0 15 15" fill="none" stroke="#0d6efd" stroke-width="1.200"><rect x="1.500" y="1.500" width="4.500" height="3.500" rx=".8"/><rect x="9" y="5.700" width="4.500" height="3.500" rx=".8"/><rect x="9" y="10.700" width="4.500" height="3.500" rx=".8"/><path d="M3.800 5v7.500H9M3.800 7.500H9"/></svg></div>
<div class="t m" style="left:1346.29px;top:299.0px;font-size:13.5px;line-height:18px;letter-spacing:0.026px;color:#0d6efd">Dialog Tree</div>
<svg class="abs" style="left:1453px;top:299px" width="6" height="18" viewBox="0 0 6 18" fill="#444"><circle cx="3" cy="3" r="1.500"/><circle cx="3" cy="9" r="1.500"/><circle cx="3" cy="15" r="1.500"/></svg>
<div class="t" style="left:842.37px;top:352.6px;font-size:12.5px;line-height:16px;letter-spacing:0.789px;color:#707070">Date time:</div>
<div class="t m2" style="left:1020.33px;top:352.1px;font-size:13px;line-height:17px;letter-spacing:-0.183px;--n:-1.2px;color:#111">Nov 04, 2025 09:05:5<i class="n1">1</i></div>
<div class="t" style="left:1166.57px;top:352.6px;font-size:12.5px;line-height:16px;letter-spacing:0.779px;color:#707070">Duration:</div>
<div class="t m2" style="left:1421.39px;top:352.1px;font-size:13px;line-height:17px;letter-spacing:-0.107px;color:#111">0:00.592</div>
<div class="t" style="left:842.57px;top:378.8px;font-size:12.5px;line-height:16px;letter-spacing:0.852px;color:#707070">miniApp Name:</div>
<div class="t m2" style="left:962.21px;top:378.3px;font-size:13px;line-height:17px;letter-spacing:0.14px;color:#111">SND_dps_pdc_ocp_application</div>
<div class="t" style="left:1166.77px;top:378.8px;font-size:12.5px;line-height:16px;letter-spacing:0.699px;color:#707070">miniApp Type:</div>
<div class="t m2" style="left:1442.03px;top:378.3px;font-size:13px;line-height:17px;letter-spacing:0.361px;color:#111">Flow</div>
<div class="t" style="left:843.38px;top:405.1px;font-size:12.5px;line-height:16px;letter-spacing:0.493px;color:#707070">Application Version:</div>
<div class="t" style="left:1166.97px;top:405.1px;font-size:12.5px;line-height:16px;letter-spacing:0.55px;color:#707070">Group:</div>
<div class="t m2" style="left:1428.35px;top:404.6px;font-size:13px;line-height:17px;letter-spacing:0.499px;color:#111">ocp-qa</div>
<div class="t" style="left:842.77px;top:431.6px;font-size:12.5px;line-height:16px;letter-spacing:0.49px;color:#707070">Channel:</div>
<div class="t m2" style="left:1090.02px;top:431.1px;font-size:13px;line-height:17px;letter-spacing:0.532px;color:#111">web-chat</div>
<div class="t" style="left:1167.58px;top:431.6px;font-size:12.5px;line-height:16px;letter-spacing:0.184px;color:#707070">ANI:</div>
<div class="t m2" style="left:1408.36px;top:431.1px;font-size:13px;line-height:17px;letter-spacing:0.745px;color:#111">undefined</div>
<div class="t" style="left:842.83px;top:458.4px;font-size:12.5px;line-height:16px;letter-spacing:0.099px;color:#707070">Session ID:</div>
<div class="t m2" style="left:1063.63px;top:460.2px;font-size:13px;line-height:17px;letter-spacing:-0.217px;color:#111">72e...9add</div>
<svg class="abs" style="left:1132.5px;top:458.9px" width="15" height="15" viewBox="0 0 15 15" fill="none" stroke="#1a7be8" stroke-width="1.150"><rect x="1" y="4.200" width="9.500" height="9.800" rx="1"/><path d="M4.500 4V1h9.500v9.500h-3.300"/></svg>
<div class="t" style="left:1166.57px;top:458.4px;font-size:12.5px;line-height:16px;letter-spacing:0.497px;color:#707070">Dialog ID:</div>
<div class="t m2" style="left:1387.49px;top:460.2px;font-size:13px;line-height:17px;letter-spacing:-0.177px;color:#111">072...0c09</div>
<svg class="abs" style="left:1456.5px;top:458.9px" width="15" height="15" viewBox="0 0 15 15" fill="none" stroke="#1a7be8" stroke-width="1.150"><rect x="1" y="4.200" width="9.500" height="9.800" rx="1"/><path d="M4.500 4V1h9.500v9.500h-3.300"/></svg>
<div class="t" style="left:842.77px;top:487.2px;font-size:12.5px;line-height:16px;letter-spacing:0.561px;color:#707070">Connection ID:</div>
<div class="t m2" style="left:1066.45px;top:489.0px;font-size:13px;line-height:17px;letter-spacing:-0.341px;color:#111">cha...3c3c</div>
<svg class="abs" style="left:1132.5px;top:487.7px" width="15" height="15" viewBox="0 0 15 15" fill="none" stroke="#1a7be8" stroke-width="1.150"><rect x="1" y="4.200" width="9.500" height="9.800" rx="1"/><path d="M4.500 4V1h9.500v9.500h-3.300"/></svg>
<div class="t" style="left:1166.57px;top:487.2px;font-size:12.5px;line-height:16px;letter-spacing:0.484px;color:#707070">Dialog Group ID:</div>
<div class="t m2" style="left:1387.49px;top:489.0px;font-size:13px;line-height:17px;letter-spacing:-0.177px;color:#111">072...0c09</div>
<svg class="abs" style="left:1456.5px;top:487.7px" width="15" height="15" viewBox="0 0 15 15" fill="none" stroke="#1a7be8" stroke-width="1.150"><rect x="1" y="4.200" width="9.500" height="9.800" rx="1"/><path d="M4.500 4V1h9.500v9.500h-3.300"/></svg>
<div class="t" style="left:823px;top:552.7px;width:8px;text-align:center;font-size:13px;line-height:16px;color:#333">1</div>
<div class="t" style="left:823px;top:628px;width:8px;text-align:center;font-size:13px;line-height:16px;color:#333">2</div>
<div class="t" style="left:823px;top:746px;width:8px;text-align:center;font-size:13px;line-height:16px;color:#333">3</div>
<div class="t" style="left:823px;top:862px;width:8px;text-align:center;font-size:13px;line-height:16px;color:#333">4</div>
<svg class="abs" style="left:820px;top:540px" width="40" height="400" viewBox="0 0 40 400" fill="none" stroke="#cdcdcd" stroke-width="1.100"><path d="M6.500 36a22.500 22.500 0 0 0 22.500 22.500M6.500 111v43a22.500 22.500 0 0 0 22.500 22.500M6.500 229v43a22.500 22.500 0 0 0 22.500 22.500M6.500 344a22.500 19.500 0 0 0 22.500 19.500"/></svg>
<div class="abs" style="left:842px;top:550px;width:30px;height:30px;border-radius:50%;background:#f2f2f2"></div>
<svg class="abs" style="left:850px;top:555.8px" width="14" height="18" viewBox="0 0 14 18" fill="none" stroke="#333" stroke-width="1.7"><rect x=".85" y="6" width="12.300" height="11.100" rx="1.300"/><path d="M7 6V2.500"/><circle cx="7" cy="1.800" r="1.250" fill="#333" stroke="none"/><path d="M4.300 14h5.400"/><path d="M3.900 9.900h2.100M8 9.900h2.100" stroke-width="1.200"/></svg>
<div class="bb" style="left:882px;top:549.5px;width:181.5px"></div>
<div class="t" style="left:901.63px;top:560.7px;font-size:15.5px;line-height:20px;letter-spacing:0.097px;color:#222">How can i help you?</div>
<div class="ub" style="left:1344.5px;top:623px;width:95.5px"></div>
<div class="t" style="left:1364.73px;top:631.6px;font-size:15px;line-height:20px;letter-spacing:0.464px;color:#222">balance</div>
<div class="abs" style="left:1450px;top:618px;width:30px;height:30px;border-radius:50%;background:#e6eefb"></div>
<svg class="abs" style="left:1456px;top:623.5px" width="18" height="18" viewBox="0 0 18 18" fill="#4e63ab"><circle cx="9" cy="4.700" r="3.600"/><ellipse cx="9" cy="14.200" rx="7.600" ry="3.800"/></svg>
<div class="t" style="left:1450.49px;top:652.7px;font-size:10.5px;line-height:14px;letter-spacing:0.742px;color:#666">09:05</div>
<div class="t" style="left:1320.5px;top:630px;font-size:18px;line-height:20px;color:#6a6a6a;transform:scaleX(1.3);transform-origin:0 0">#</div>
<svg class="abs" style="left:1292.5px;top:635.5px" width="12" height="8" viewBox="0 0 12 8" fill="none" stroke="#555" stroke-width="1.700"><path d="M1 1.200 6 6.200l5-5"/></svg>
<div class="abs" style="left:842px;top:668.5px;width:30px;height:30px;border-radius:50%;background:#f2f2f2"></div>
<svg class="abs" style="left:850px;top:674.3px" width="14" height="18" viewBox="0 0 14 18" fill="none" stroke="#333" stroke-width="1.7"><rect x=".85" y="6" width="12.300" height="11.100" rx="1.300"/><path d="M7 6V2.500"/><circle cx="7" cy="1.800" r="1.250" fill="#333" stroke="none"/><path d="M4.300 14h5.400"/><path d="M3.900 9.900h2.100M8 9.900h2.100" stroke-width="1.200"/></svg>
<div class="bb" style="left:882px;top:668.0px;width:210.5px"></div>
<div class="t" style="left:901.63px;top:679.2px;font-size:15.5px;line-height:20px;letter-spacing:0.034px;color:#222">Please tell me your card.</div>
<div class="ub" style="left:1362px;top:741px;width:78px"></div>
<div class="t" style="left:1382.54px;top:749.6px;font-size:15px;line-height:20px;letter-spacing:-0.315px;--n:-1.38px;color:#222"><i class="n1">1</i>2345</div>
<div class="abs" style="left:1450px;top:736px;width:30px;height:30px;border-radius:50%;background:#e6eefb"></div>
<svg class="abs" style="left:1456px;top:741.5px" width="18" height="18" viewBox="0 0 18 18" fill="#4e63ab"><circle cx="9" cy="4.700" r="3.600"/><ellipse cx="9" cy="14.200" rx="7.600" ry="3.800"/></svg>
<div class="t" style="left:1450.49px;top:770.7px;font-size:10.5px;line-height:14px;letter-spacing:0.742px;color:#666">09:05</div>
<div class="t" style="left:1338.5px;top:748px;font-size:18px;line-height:20px;color:#6a6a6a;transform:scaleX(1.3);transform-origin:0 0">#</div>
<svg class="abs" style="left:1310px;top:753.5px" width="12" height="8" viewBox="0 0 12 8" fill="none" stroke="#555" stroke-width="1.700"><path d="M1 1.200 6 6.200l5-5"/></svg>
<div class="abs" style="left:842px;top:786.5px;width:30px;height:30px;border-radius:50%;background:#f2f2f2"></div>
<svg class="abs" style="left:850px;top:792.3px" width="14" height="18" viewBox="0 0 14 18" fill="none" stroke="#333" stroke-width="1.7"><rect x=".85" y="6" width="12.300" height="11.100" rx="1.300"/><path d="M7 6V2.500"/><circle cx="7" cy="1.800" r="1.250" fill="#333" stroke="none"/><path d="M4.300 14h5.400"/><path d="M3.900 9.900h2.100M8 9.900h2.100" stroke-width="1.200"/></svg>
<div class="bb" style="left:882px;top:786.0px;width:215.5px"></div>
<div class="t" style="left:902.86px;top:797.2px;font-size:15.5px;line-height:20px;letter-spacing:-0.056px;--n:-1.43px;color:#222">your balance is <i class="n1">1</i>0 dollars.</div>
<div class="ub" style="left:1362.5px;top:859px;width:77.5px"></div>
<div class="t" style="left:1382.23px;top:867.6px;font-size:15px;line-height:20px;letter-spacing:1.041px;color:#222">[hup]</div>
<div class="abs" style="left:1450px;top:854px;width:30px;height:30px;border-radius:50%;background:#e6eefb"></div>
<svg class="abs" style="left:1456px;top:859.5px" width="18" height="18" viewBox="0 0 18 18" fill="#4e63ab"><circle cx="9" cy="4.700" r="3.600"/><ellipse cx="9" cy="14.200" rx="7.600" ry="3.800"/></svg>
<div class="t" style="left:1450.49px;top:888.7px;font-size:10.5px;line-height:14px;letter-spacing:0.742px;color:#666">09:05</div>
<div class="t" style="left:1339px;top:866px;font-size:18px;line-height:20px;color:#6a6a6a;transform:scaleX(1.3);transform-origin:0 0">#</div>
<svg class="abs" style="left:1310.5px;top:871.5px" width="12" height="8" viewBox="0 0 12 8" fill="none" stroke="#555" stroke-width="1.700"><path d="M1 1.200 6 6.200l5-5"/></svg>
<div class="t z" style="left:1089.83px;top:108.5px;font-size:12.5px;line-height:16px;letter-spacing:0.276px;color:#666">Search by</div>
<div class="t z" style="left:1085.37px;top:134.7px;font-size:15px;line-height:20px;letter-spacing:0.518px;color:#222">Dialog ID</div>
<svg class="abs z" style="left:1197px;top:141.500px" width="14" height="9" viewBox="0 0 14 9" fill="none" stroke="#555" stroke-width="1.800"><path d="M1.500 7.500 7 2l5.500 5.500"/></svg>
<div class="abs" style="left:1086px;top:161px;width:132px;height:2px;background:#5b9af3"></div>
<svg class="abs" style="left:1235px;top:132px" width="23" height="23" viewBox="0 0 23 23" fill="none" stroke="#2c3e6b" stroke-width="1.600" stroke-linecap="round"><circle cx="9.500" cy="9.500" r="7.500"/><path d="M15 15l6 6"/></svg>
<div class="t" style="left:1263.83px;top:133.0px;font-size:15px;line-height:20px;letter-spacing:0.322px;color:#bdbdbd">paste your ID</div>
<div class="abs" style="left:1228px;top:161px;width:260px;height:1.500px;background:#dedede"></div>
<div class="dd"><div class="abs" style="left:0;top:9px;width:165px;height:31px;background:#0d6efd"></div></div>
<div class="t" style="left:1077.17px;top:180.0px;font-size:15px;line-height:20px;letter-spacing:0.556px;color:#fff;z-index:12">Dialog ID</div>
<div class="t" style="left:1077.72px;top:211.2px;font-size:15px;line-height:20px;letter-spacing:0.006px;color:#222;z-index:12">Session ID</div>
<div class="t" style="left:1077.64px;top:242.4px;font-size:15px;line-height:20px;letter-spacing:0.501px;color:#222;z-index:12">Connection ID</div>
<div class="pink"></div>
</body>
</html>
